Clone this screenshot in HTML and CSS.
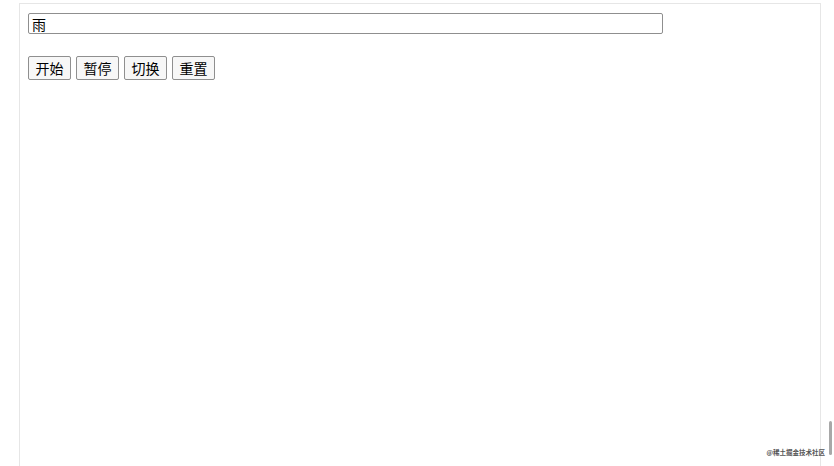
FILE: index.html
```html
<!DOCTYPE html>
<html lang="zh">
<head>
<meta charset="utf-8">
<title>demo</title>
<link rel="stylesheet" href="styles.css">
</head>
<body>
<div class="frame">
  <div class="panel">
    <input class="field" type="text" value="雨">
    <div class="controls">
      <button class="btn">开始</button>
      <button class="btn">暂停</button>
      <button class="btn">切换</button>
      <button class="btn">重置</button>
    </div>
  </div>
  <div class="thumb"></div>
</div>
<div class="mark">@稀土掘金技术社区</div>
</body>
</html>
```
FILE: styles.css
```css
html, body {
  margin: 0;
  height: 100%;
  background: #fff;
  font-family: "Liberation Sans", "Noto Sans CJK SC", sans-serif;
  overflow: hidden;
}
.frame {
  position: relative;
  height: 100%;
  box-sizing: border-box;
  padding: 3px 13px 0 19px;
}
.panel {
  height: 100%;
  box-sizing: border-box;
  border: 1px solid #e6e6e6;
  border-bottom: none;
  padding: 9px 8px;
  display: flex;
  flex-direction: column;
  align-items: flex-start;
  gap: 22px;
}
.field {
  width: 635px;
  height: 21px;
  box-sizing: border-box;
  margin: 0;
  padding: 0 3px;
  border: 1px solid #8f8f8f;
  border-radius: 2px;
  font-family: "Liberation Sans", "Noto Sans CJK SC", sans-serif;
  font-size: 14px;
  line-height: 19px;
  color: #000;
}
.controls {
  display: flex;
  gap: 5px;
}
.btn {
  height: 24px;
  width: 43px;
  box-sizing: border-box;
  margin: 0;
  padding: 0;
  border: 1px solid #8f8f8f;
  border-radius: 2px;
  background: #f7f7f7;
  font-family: "Liberation Sans", "Noto Sans CJK SC", sans-serif;
  font-size: 14px;
  color: #000;
}
.thumb {
  position: absolute;
  right: 2px;
  top: 421px;
  width: 3px;
  height: 34px;
  background: #a8a8a8;
  border-radius: 2px;
}
.mark {
  position: absolute;
  right: 9px;
  bottom: 9px;
  font-size: 6.5px;
  font-weight: bold;
  color: #555;
  font-family: "Noto Sans CJK SC", sans-serif;
}
```
